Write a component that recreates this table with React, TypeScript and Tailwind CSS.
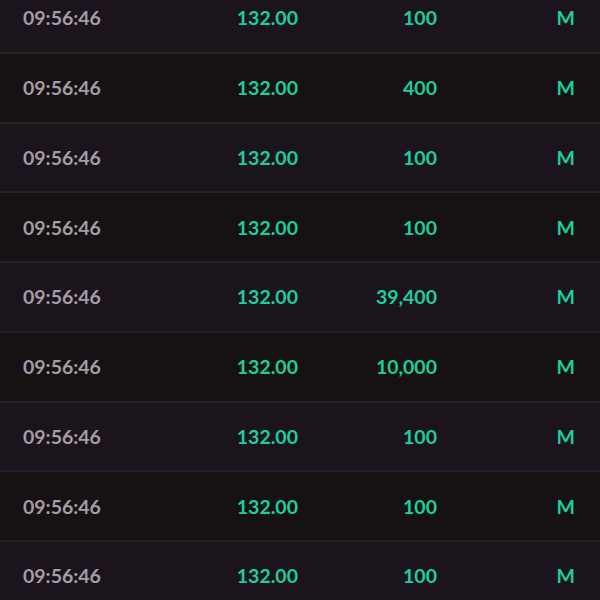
import React from "react";

const rows = [
  { t: "09:56:46", p: "132.00", q: "100" },
  { t: "09:56:46", p: "132.00", q: "400" },
  { t: "09:56:46", p: "132.00", q: "100" },
  { t: "09:56:46", p: "132.00", q: "100" },
  { t: "09:56:46", p: "132.00", q: "39,400" },
  { t: "09:56:46", p: "132.00", q: "10,000" },
  { t: "09:56:46", p: "132.00", q: "100" },
  { t: "09:56:46", p: "132.00", q: "100" },
  { t: "09:56:46", p: "132.00", q: "100" },
];

export default function App() {
  return (
    <div
      className="w-[600px] h-[600px] overflow-hidden bg-[#1b141d]"
      style={{ fontFamily: "Lato, 'Open Sans', sans-serif" }}
    >
      <div className="-mt-[16px] flex flex-col">
        {rows.map((r, i) => (
          <div
            key={i}
            className={`flex items-center h-[69.75px] border-b-2 border-[#272027] text-[19.5px] font-bold ${
              i % 2 === 0 ? "bg-[#1b141d]" : "bg-[#161113]"
            }`}
          >
            <div className="w-[200px] pl-[23px] text-[#a59ca6]">{r.t}</div>
            <div className="w-[98px] text-right text-[#1ccf9a]">{r.p}</div>
            <div className="w-[139px] text-right text-[#1ccf9a]">{r.q}</div>
            <div className="w-[138px] text-right text-[#1ccf9a]">M</div>
          </div>
        ))}
      </div>
    </div>
  );
}
